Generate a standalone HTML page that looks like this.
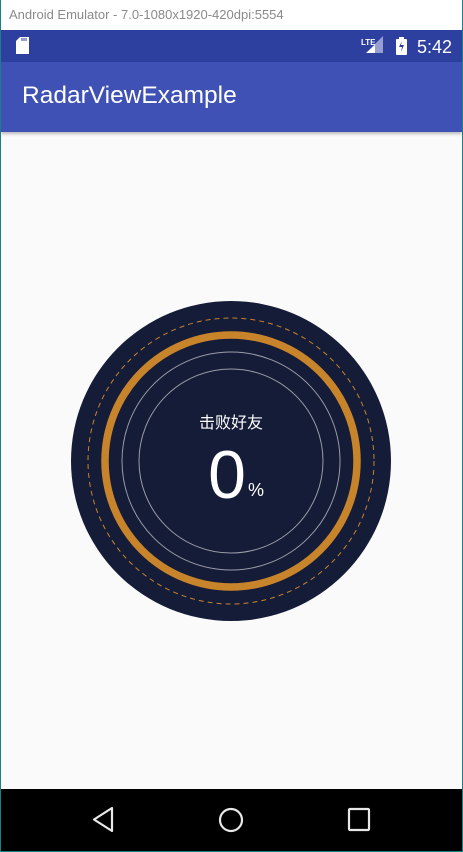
<!DOCTYPE html>
<html><head><meta charset="utf-8"><style>
html,body{margin:0;padding:0;}
body{width:463px;height:852px;position:relative;overflow:hidden;background:#1b7f8a;font-family:"Liberation Sans","Noto Sans CJK SC",sans-serif;}
#win{position:absolute;left:1px;top:0;width:461px;height:851px;background:#fafafa;overflow:hidden;}
#title{position:absolute;left:0;top:0;width:461px;height:30px;background:#fff;color:#8a8a8a;font-size:13px;line-height:30px;padding-left:8px;box-sizing:border-box;}
#status{position:absolute;left:0;top:30px;width:461px;height:32px;background:#2d3f9f;}
#appbar{position:absolute;left:0;top:62px;width:461px;height:70px;background:#3f51b5;box-shadow:0 2px 3px rgba(0,0,0,.25);}
#appbar span{position:absolute;left:21px;top:20px;color:#fff;font-size:24.5px;}
#nav{position:absolute;left:0;top:789px;width:461px;height:62px;background:#000;}
</style></head><body>
<div id="win">
<div id="title">Android Emulator - 7.0-1080x1920-420dpi:5554</div>
<div id="status">
<svg width="461" height="32" style="position:absolute;left:0;top:0">
<path d="M19 7h9v17h-13v-13z" fill="#fff"/>
<path d="M21 8v3M23 8v3M25 8v3" stroke="#2d3f9f" stroke-width="1"/>
<text x="360" y="15" font-size="8" font-weight="bold" fill="#fff" font-family="Liberation Sans">LTE</text>
<path d="M382 6v17h-17z" fill="#fff" opacity=".5"/>
<path d="M374 15v8h-9z" fill="#fff"/>
<rect x="395" y="9" width="11" height="16" fill="#fff" rx="1"/><rect x="398" y="7" width="5" height="3" fill="#fff"/>
<path d="M401 11l-3 6h3l-1 5 3-7h-3z" fill="#2d3f9f"/>
<text x="416" y="23" font-size="18" fill="#fff" font-family="Liberation Sans">5:42</text>
</svg>
</div>
<div id="appbar"><span>RadarViewExample</span></div>
<svg width="461" height="852" style="position:absolute;left:-1px;top:0">
<circle cx="231" cy="461" r="160" fill="#151c38"/>
<circle cx="231" cy="461" r="143" fill="none" stroke="#c8842a" stroke-width="1" stroke-dasharray="5 4"/>
<circle cx="231" cy="461" r="126" fill="none" stroke="#c8842a" stroke-width="7.5"/>
<circle cx="231" cy="461" r="109" fill="none" stroke="#9a9ca8" stroke-width="1"/>
<circle cx="231" cy="461" r="92" fill="none" stroke="#9a9ca8" stroke-width="1"/>
<text x="231" y="428" text-anchor="middle" font-size="16" fill="#fff" font-family="Liberation Sans, Noto Sans CJK SC, sans-serif">击败好友</text>
<text x="227" y="498" text-anchor="middle" font-size="68" fill="#fff" font-family="Liberation Sans">0</text>
<text x="248" y="496" font-size="18" fill="#fff" font-family="Liberation Sans">%</text>
</svg>
<div id="nav">
<svg width="461" height="62" style="position:absolute;left:-1px;top:0">
<path d="M112 19v23l-18-11.5z" fill="none" stroke="#e8e8e8" stroke-width="2.2" stroke-linejoin="round"/>
<circle cx="231" cy="31" r="11" fill="none" stroke="#e8e8e8" stroke-width="2.2"/>
<rect x="349" y="20" width="20" height="21" fill="none" stroke="#e8e8e8" stroke-width="2.2" rx="1"/>
</svg>
</div>
</div>
</body></html>
